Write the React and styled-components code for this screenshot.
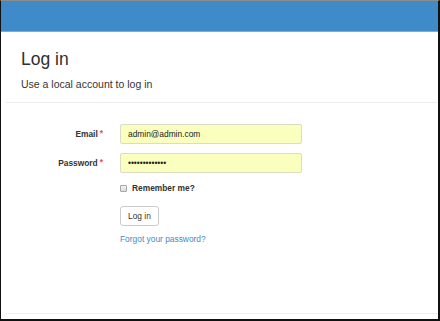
import React from 'react';
import styled, {createGlobalStyle} from 'styled-components';

const GlobalStyle = createGlobalStyle`
  html, body {
    margin: 0;
    padding: 0;
    background: #ffffff;
  }
  body {
    font-family: "Liberation Sans", Arial, sans-serif;
    color: #333333;
  }
`;

function App() {
    return (
        <>
            <GlobalStyle/>
            <Frame>
                <Navbar/>
                <Body>
                    <Section>
                        <Title>Log in</Title>
                        <Subtitle>Use a local account to log in</Subtitle>
                    </Section>
                    <Rule/>
                    <Form onSubmit={e => e.preventDefault()}>
                        <Row>
                            <Label htmlFor="email">Email<Required>*</Required></Label>
                            <Input id="email" type="text" defaultValue="admin@admin.com"/>
                        </Row>
                        <Row>
                            <Label htmlFor="password">Password<Required>*</Required></Label>
                            <Input id="password" type="password" defaultValue="1234567890123"/>
                        </Row>
                        <Field $top={0}>
                            <Remember>
                                <Check type="checkbox"/>
                                Remember me?
                            </Remember>
                        </Field>
                        <Field $top={10}>
                            <Button type="submit">Log in</Button>
                        </Field>
                        <Field $top={7}>
                            <Forgot href="#">Forgot your password?</Forgot>
                        </Field>
                    </Form>
                    <Footer/>
                </Body>
            </Frame>
        </>
    );
}

export default App;

const Frame = styled.div`
  width: 440px;
  height: 321px;
  box-sizing: border-box;
  border-top: 1px solid #8c8c8c;
  border-left: 1px solid #111111;
  border-right: 2px solid #111111;
  border-bottom: 2px solid #111111;
  display: flex;
  flex-direction: column;
  background: #ffffff;
  overflow: hidden;
`;

const Navbar = styled.div`
  height: 30px;
  flex-shrink: 0;
  background: #3f8ac9;
  border-bottom: 1px solid #79acdd;
`;

const Body = styled.div`
  flex: 1;
  display: flex;
  flex-direction: column;
  padding-left: 5px;
`;

const Section = styled.div`
  padding: 17px 15px 0;
`;

const Title = styled.h2`
  margin: 0;
  font-size: 17.5px;
  line-height: 20px;
  font-weight: normal;
  color: #2f2f2f;
`;

const Subtitle = styled.h4`
  margin: 8px 0 0;
  font-size: 10.5px;
  line-height: 14px;
  font-weight: normal;
  color: #333333;
`;

const Rule = styled.div`
  margin-top: 11px;
  border-top: 1px solid #eeeeee;
`;

const Form = styled.form`
  margin: 21px 0 0;
  padding-left: 15px;
  display: flex;
  flex-direction: column;
`;

const Row = styled.div`
  display: grid;
  grid-template-columns: 82px 182px;
  column-gap: 17px;
  align-items: center;
  margin-bottom: 9px;
`;

const Label = styled.label`
  text-align: right;
  font-size: 8.4px;
  font-weight: bold;
  color: #333333;
`;

const Required = styled.span`
  color: #d9534f;
  margin-left: 2px;
  position: relative;
  top: -1px;
`;

const Input = styled.input`
  box-sizing: border-box;
  width: 182px;
  height: 20px;
  padding: 0 7px;
  border: 1px solid #dcdcc4;
  border-radius: 2px;
  background: #faffbd;
  font-family: "Liberation Sans", Arial, sans-serif;
  font-size: 8.4px;
  color: #222222;
  outline: none;
`;

const Field = styled.div`
  margin-left: 99px;
  margin-top: ${({$top}) => $top}px;
`;

const Remember = styled.label`
  display: flex;
  align-items: center;
  gap: 5px;
  height: 13px;
  line-height: 13px;
  font-size: 8.4px;
  font-weight: bold;
  color: #333333;
`;

const Check = styled.input`
  appearance: none;
  margin: 0;
  width: 7px;
  height: 7px;
  box-sizing: border-box;
  border: 1px solid #a6a6a6;
  border-radius: 1px;
  background: linear-gradient(#f4f4f4, #dcdcdc);
`;

const Button = styled.button`
  box-sizing: border-box;
  height: 20px;
  padding: 0 7px;
  background: #ffffff;
  border: 1px solid #cccccc;
  border-radius: 3px;
  font-family: "Liberation Sans", Arial, sans-serif;
  font-size: 8.4px;
  color: #333333;
  cursor: pointer;
`;

const Forgot = styled.a`
  display: block;
  line-height: 13px;
  font-size: 8.4px;
  color: #428bca;
  text-decoration: none;
`;

const Footer = styled.div`
  margin-top: auto;
  height: 5px;
  border-top: 1px solid #eeeeee;
`;
